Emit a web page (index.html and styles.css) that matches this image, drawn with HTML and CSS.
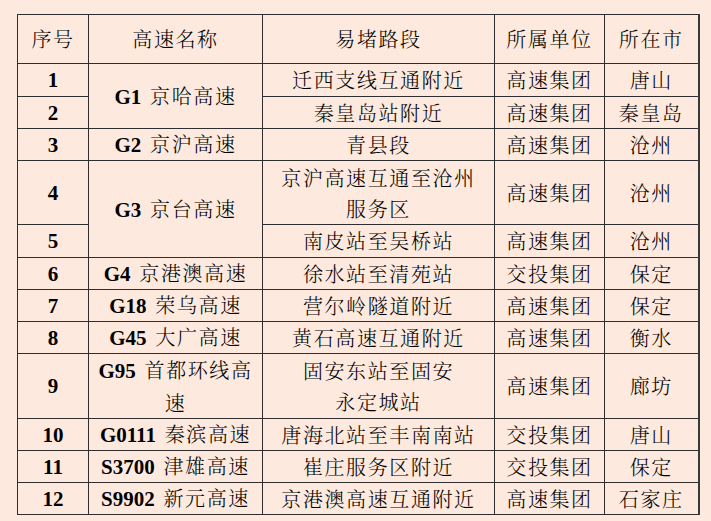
FILE: index.html
```html
<!DOCTYPE html>
<html lang="zh-CN">
<head>
<meta charset="utf-8">
<title>易堵路段</title>
<link rel="stylesheet" href="styles.css">
</head>
<body>
<div class="wrap">
<table class="t">
  <colgroup>
    <col class="c1"><col class="c2"><col class="c3"><col class="c4"><col class="c5">
  </colgroup>
  <thead>
    <tr class="hd">
      <th>序号</th><th>高速名称</th><th>易堵路段</th><th>所属单位</th><th>所在市</th>
    </tr>
  </thead>
  <tbody>
    <tr class="r33">
      <td class="num">1</td>
      <td class="name" rowspan="2"><b>G1</b> 京哈高速</td>
      <td>迁西支线互通附近</td><td>高速集团</td><td>唐山</td>
    </tr>
    <tr class="r32">
      <td class="num">2</td>
      <td>秦皇岛站附近</td><td>高速集团</td><td>秦皇岛</td>
    </tr>
    <tr class="r32">
      <td class="num">3</td>
      <td class="name"><b>G2</b> 京沪高速</td>
      <td>青县段</td><td>高速集团</td><td>沧州</td>
    </tr>
    <tr class="r64">
      <td class="num">4</td>
      <td class="name" rowspan="2"><b>G3</b> 京台高速</td>
      <td class="two">京沪高速互通至沧州<br>服务区</td><td>高速集团</td><td>沧州</td>
    </tr>
    <tr class="r33">
      <td class="num">5</td>
      <td>南皮站至吴桥站</td><td>高速集团</td><td>沧州</td>
    </tr>
    <tr class="r32">
      <td class="num">6</td>
      <td class="name"><b>G4</b> 京港澳高速</td>
      <td>徐水站至清苑站</td><td>交投集团</td><td>保定</td>
    </tr>
    <tr class="r32">
      <td class="num">7</td>
      <td class="name"><b>G18</b> 荣乌高速</td>
      <td>营尔岭隧道附近</td><td>高速集团</td><td>保定</td>
    </tr>
    <tr class="r32">
      <td class="num">8</td>
      <td class="name"><b>G45</b> 大广高速</td>
      <td>黄石高速互通附近</td><td>高速集团</td><td>衡水</td>
    </tr>
    <tr class="r64">
      <td class="num">9</td>
      <td class="name two"><b>G95</b> 首都环线高<br>速</td>
      <td class="two">固安东站至固安<br>永定城站</td><td>高速集团</td><td>廊坊</td>
    </tr>
    <tr class="r32">
      <td class="num">10</td>
      <td class="name"><b>G0111</b> 秦滨高速</td>
      <td>唐海北站至丰南南站</td><td>交投集团</td><td>唐山</td>
    </tr>
    <tr class="r32">
      <td class="num">11</td>
      <td class="name"><b>S3700</b> 津雄高速</td>
      <td>崔庄服务区附近</td><td>交投集团</td><td>保定</td>
    </tr>
    <tr class="r32">
      <td class="num">12</td>
      <td class="name"><b>S9902</b> 新元高速</td>
      <td>京港澳高速互通附近</td><td>高速集团</td><td>石家庄</td>
    </tr>
  </tbody>
</table>
</div>
</body>
</html>
```

FILE: styles.css
```css
html, body {
  margin: 0;
  padding: 0;
  background: #fde9dd;
}

.wrap {
  padding: 14px 0 0 17px;
}

.t {
  border-collapse: collapse;
  table-layout: fixed;
  width: 681px;
  color: #000;
  font-family: "Noto Serif CJK SC", "Noto Sans CJK SC", sans-serif;
  font-size: 20px;
  font-weight: 300;
  border-right: 2px solid #3a3a3a;
}

.c1 { width: 71px; }
.c2 { width: 174px; }
.c3 { width: 232px; }
.c4 { width: 110px; }
.c5 { width: 94px; }

.t th,
.t td {
  border: 1px solid #2e2e2e;
  padding: 0;
  text-align: center;
  vertical-align: middle;
  letter-spacing: 1.6px;
  line-height: 24px;
  white-space: nowrap;
}

.t th {
  font-weight: 300;
}

.hd { height: 49px; }
.r33 { height: 33px; }
.r32 { height: 32px; }
.r64 { height: 64px; }

.t td.two {
  line-height: 31px;
}

.t td.num,
.t td.name b {
  font-family: "Liberation Serif", "Times New Roman", serif;
  font-weight: 700;
  font-size: 21px;
  letter-spacing: 0;
}

.t td.name b {
  margin-right: 2px;
}
```
